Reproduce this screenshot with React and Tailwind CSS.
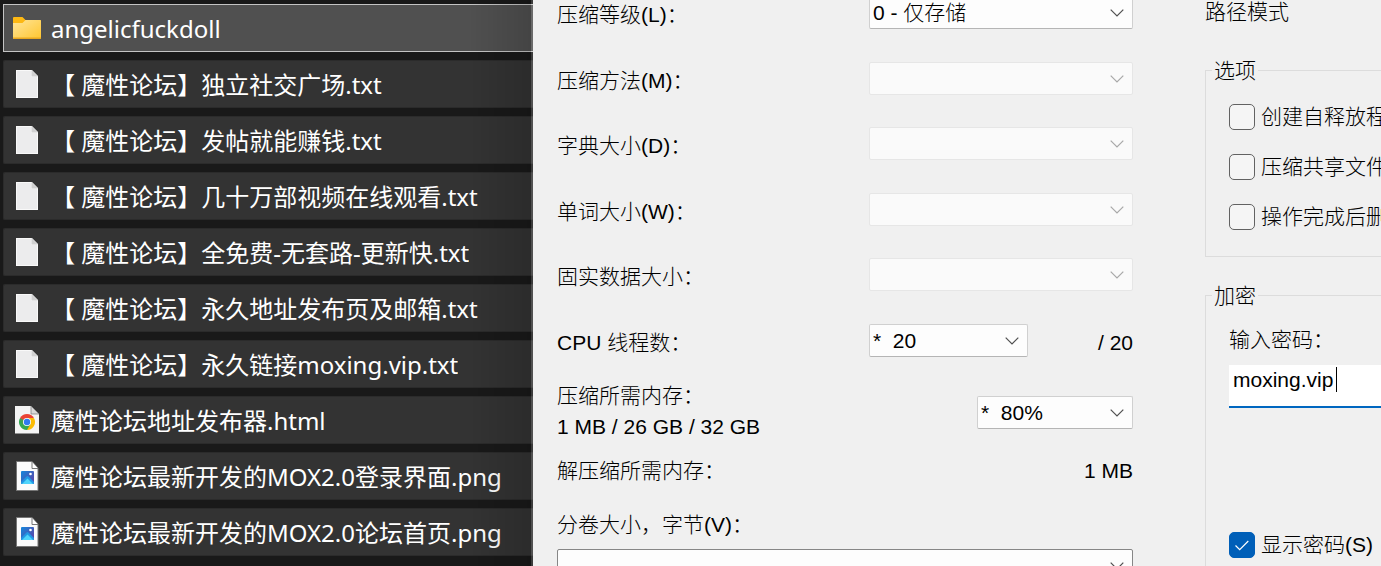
import React, { useState } from 'react';

const files = [
    { name: 'angelicfuckdoll', type: 'folder' },
    { name: '【 魔性论坛】独立社交广场.txt', type: 'txt' },
    { name: '【 魔性论坛】发帖就能赚钱.txt', type: 'txt' },
    { name: '【 魔性论坛】几十万部视频在线观看.txt', type: 'txt' },
    { name: '【 魔性论坛】全免费-无套路-更新快.txt', type: 'txt' },
    { name: '【 魔性论坛】永久地址发布页及邮箱.txt', type: 'txt' },
    { name: '【 魔性论坛】永久链接moxing.vip.txt', type: 'txt' },
    { name: '魔性论坛地址发布器.html', type: 'html' },
    { name: '魔性论坛最新开发的MOX2.0登录界面.png', type: 'png' },
    { name: '魔性论坛最新开发的MOX2.0论坛首页.png', type: 'png' },
];

const FolderIcon = () => (
    <svg width="28" height="22" viewBox="0 0 28 22">
        <defs>
            <linearGradient id="folder" x1="0" y1="0" x2="1" y2="1">
                <stop offset="0" stopColor="#ffe59a" />
                <stop offset="1" stopColor="#ffc62f" />
            </linearGradient>
        </defs>
        <path d="M0 1a1 1 0 0 1 1-1h8.5l3 3H27a1 1 0 0 1 1 1v8H0z" fill="#fdb813" />
        <path d="M0 6h9.5l3-3H27a1 1 0 0 1 1 1v17a1 1 0 0 1-1 1H1a1 1 0 0 1-1-1z" fill="url(#folder)" />
        <path d="M0 20.5h28v.5a1 1 0 0 1-1 1H1a1 1 0 0 1-1-1z" fill="#e9a820" />
    </svg>
);

const TxtIcon = () => (
    <svg width="22" height="28" viewBox="0 0 22 28">
        <path d="M0 0h16l6 6v22H0z" fill="#f9f9f9" />
        <path d="M1 1h14v6h6v20H1z" fill="#ececed" />
        <path d="M15.500 0v6.500H22z" fill="#d0d0d0" />
    </svg>
);

const HtmlIcon = () => (
    <svg width="24" height="28" viewBox="0 0 24 28">
        <path d="M0 0h16l8 8v19.500H0z" fill="#f4f4f4" />
        <path d="M16 0v8h8z" fill="#d9d9d9" stroke="#777" strokeWidth="0.7" />
        <path d="M12 16L5.070 12A8 8 0 0 1 18.930 12z" fill="#ea4335" />
        <path d="M12 16L5.070 12A8 8 0 0 0 12 24z" fill="#34a853" />
        <path d="M12 16L18.930 12A8 8 0 0 1 12 24z" fill="#fbbc05" />
        <path d="M12 12h6.930l-3.470 6z" fill="#fbbc05" />
        <path d="M8.540 18L5.070 12l6.930 0z" fill="#ea4335" />
        <path d="M15.460 18L12 24l-3.460-6z" fill="#34a853" />
        <path d="M5.070 12l3.470 6L12 16z" fill="#34a853" />
        <circle cx="12" cy="16" r="4" fill="#fff" />
        <circle cx="12" cy="16" r="3.200" fill="#2f7af0" />
    </svg>
);

const PngIcon = () => (
    <svg width="24" height="30" viewBox="0 0 24 30">
        <defs>
            <linearGradient id="sky" x1="0" y1="0" x2="1" y2="0.800">
                <stop offset="0" stopColor="#1387dc" />
                <stop offset="1" stopColor="#5a45a8" />
            </linearGradient>
        </defs>
        <path d="M1.500 .5H17l6 6.500v22.500H1.500z" fill="#fbfbfb" stroke="#767676" />
        <path d="M17 1v6.500h6" fill="#fff" stroke="#767676" />
        <rect x="6" y="10" width="13" height="13" rx="1" fill="url(#sky)" />
        <path d="M6 21l5.500-5.500q1-1 2 0L19 21v1a1 1 0 0 1-1 1H7a1 1 0 0 1-1-1z" fill="#2196e3" />
        <path d="M7 23l5.500-5.500L18 23z" fill="#4fd4fb" />
        <circle cx="15.500" cy="13" r="1.300" fill="#fff" />
    </svg>
);

const icons = { folder: FolderIcon, txt: TxtIcon, html: HtmlIcon, png: PngIcon };

const FileRow = ({ file, selected }) => {
    const Icon = icons[file.type];
    return (
        <li
            className={`flex h-12 items-center border border-r-0 ${
                selected ? 'border-[#c4c4c4] bg-[#505050]' : 'rounded-l-xs border-[#2b2b2b] bg-[#333333]'
            }`}
        >
            <span className="flex w-[47px] shrink-0 justify-center pr-px">
                <Icon />
            </span>
            <span className="truncate pt-[2px] whitespace-pre">{file.name}</span>
        </li>
    );
};

const Select = ({ id, label, options = [], disabled, className = '', border = 'border-[#d0d0d0] border-b-[#b5b5b5]' }) => (
    <div className={`relative ${className}`}>
        <select
            id={id}
            aria-label={label}
            disabled={disabled}
            className={`block h-[33px] w-full appearance-none rounded-xs border pl-[3px] pr-8 text-black ${
                disabled ? 'border-[#e6e6e6] bg-[#fafafa]' : `bg-[#fdfdfd] ${border}`
            }`}
        >
            {options.map((option) => (
                <option key={option}>{option}</option>
            ))}
        </select>
        <svg
            className={`pointer-events-none absolute top-[13px] right-[9px] ${disabled ? 'text-[#a8a8a8]' : 'text-[#505050]'}`}
            width="14"
            height="8"
            viewBox="0 0 14 8"
            fill="none"
            stroke="currentColor"
            strokeWidth="1.2"
        >
            <path d="M.7 .7L7 7L13.300 .7" />
        </svg>
    </div>
);

const Field = ({ id, label, children }) => (
    <div className="flex h-[33px] items-center">
        <label htmlFor={id} className="w-[312px] shrink-0 pt-1">
            {label}
        </label>
        {children}
    </div>
);

const Checkbox = ({ label, defaultChecked }) => (
    <label className="flex items-center gap-[6px] whitespace-nowrap">
        <span className="relative h-[26px] w-[26px] shrink-0">
            <input
                type="checkbox"
                defaultChecked={defaultChecked}
                className="peer block h-[26px] w-[26px] appearance-none rounded-[5px] border border-[#626262] bg-[#f5f5f5] checked:border-[#005fb8] checked:bg-[#005fb8]"
            />
            <svg
                className="pointer-events-none absolute top-[8px] left-[6px] hidden peer-checked:block"
                width="14"
                height="11"
                viewBox="0 0 14 11"
                fill="none"
                stroke="#fff"
                strokeWidth="1.2"
            >
                <path d="M.5 5.500L4.700 9.700L13.300 1" />
            </svg>
        </span>
        {label}
    </label>
);

const App = () => {
    const [password, setPassword] = useState('moxing.vip');

    return (
        <div className="flex h-screen overflow-hidden bg-[#f0f0f0] text-black">
            <aside className="relative w-[533px] shrink-0 bg-[#191919] pt-1 pl-[3px] font-['Noto_Sans','Noto_Sans_CJK_SC',sans-serif] text-[24px] leading-8 text-white">
                <ul className="flex flex-col gap-2">
                    {files.map((file, i) => (
                        <FileRow key={file.name} file={file} selected={i === 0} />
                    ))}
                </ul>
                <div className="pointer-events-none absolute inset-y-0 right-0 w-16 border-r-2 border-white/15 bg-linear-to-r from-transparent to-black/15" />
            </aside>

            <div className="flex min-w-0 flex-1 gap-[72px] pl-6 font-['Liberation_Sans','Noto_Sans_CJK_SC',sans-serif] text-[21px] leading-[31px] font-light">
                <main className="-mt-1 min-w-0 flex-1">
                    <div className="flex h-[361px] flex-col justify-between">
                        <Field id="level" label="压缩等级(L)：">
                            <Select id="level" className="flex-1" options={['0 - 仅存储']} />
                        </Field>
                        <Field id="method" label="压缩方法(M)：">
                            <Select id="method" className="flex-1" disabled />
                        </Field>
                        <Field id="dict" label="字典大小(D)：">
                            <Select id="dict" className="flex-1" disabled />
                        </Field>
                        <Field id="word" label="单词大小(W)：">
                            <Select id="word" className="flex-1" disabled />
                        </Field>
                        <Field id="solid" label="固实数据大小：">
                            <Select id="solid" className="flex-1" disabled />
                        </Field>
                        <Field id="threads" label="CPU 线程数：">
                            <Select id="threads" className="w-[159px]" options={['*\u00a0\u00a020']} />
                            <span className="ml-auto pt-1">/ 20</span>
                        </Field>
                    </div>

                    <div className="mt-[23px] flex items-center justify-between">
                        <div className="pb-[2px]">
                            <p>压缩所需内存：</p>
                            <p>1 MB / 26 GB / 32 GB</p>
                        </div>
                        <Select label="压缩所需内存" className="w-[156px]" options={['*\u00a0\u00a080%']} />
                    </div>
                    <div className="mt-[11px] flex justify-between">
                        <span>解压缩所需内存：</span>
                        <span>1 MB</span>
                    </div>
                    <label htmlFor="volume" className="mt-[23px] block">
                        分卷大小，字节(V)：
                    </label>
                    <Select id="volume" className="mt-[9px]" border="border-[#868686]" />
                </main>

                <section className="w-[176px] shrink-0 overflow-hidden">
                    <h2 className="-mt-1 whitespace-nowrap">路径模式</h2>
                    <fieldset className="mt-7 -mr-8 h-[202px] border border-[#dcdcdc] pl-[23px]">
                        <legend className="-ml-[17px] px-[2px]">选项</legend>
                        <div className="mt-[15px] flex flex-col gap-[19px]">
                            <Checkbox label="创建自释放程" />
                            <Checkbox label="压缩共享文件" />
                            <Checkbox label="操作完成后删" />
                        </div>
                    </fieldset>
                    <fieldset className="mt-[23px] -mr-8 h-[320px] border border-[#dcdcdc] pl-[23px]">
                        <legend className="-ml-[17px] px-[2px]">加密</legend>
                        <label htmlFor="password" className="mt-[13px] block">
                            输入密码：
                        </label>
                        <div className="relative mt-[10px]">
                            <input
                                id="password"
                                type="text"
                                value={password}
                                onChange={(e) => setPassword(e.target.value)}
                                className="block h-[43px] w-full border-b-2 border-[#0067c0] bg-white pb-[12px] pl-1 outline-none"
                            />
                            <span className="absolute top-[2px] left-[107px] h-[25px] w-px bg-black" />
                        </div>
                        <div className="mt-[121px]">
                            <Checkbox label="显示密码(S)" defaultChecked />
                        </div>
                    </fieldset>
                </section>
            </div>
        </div>
    );
};

export default App;
